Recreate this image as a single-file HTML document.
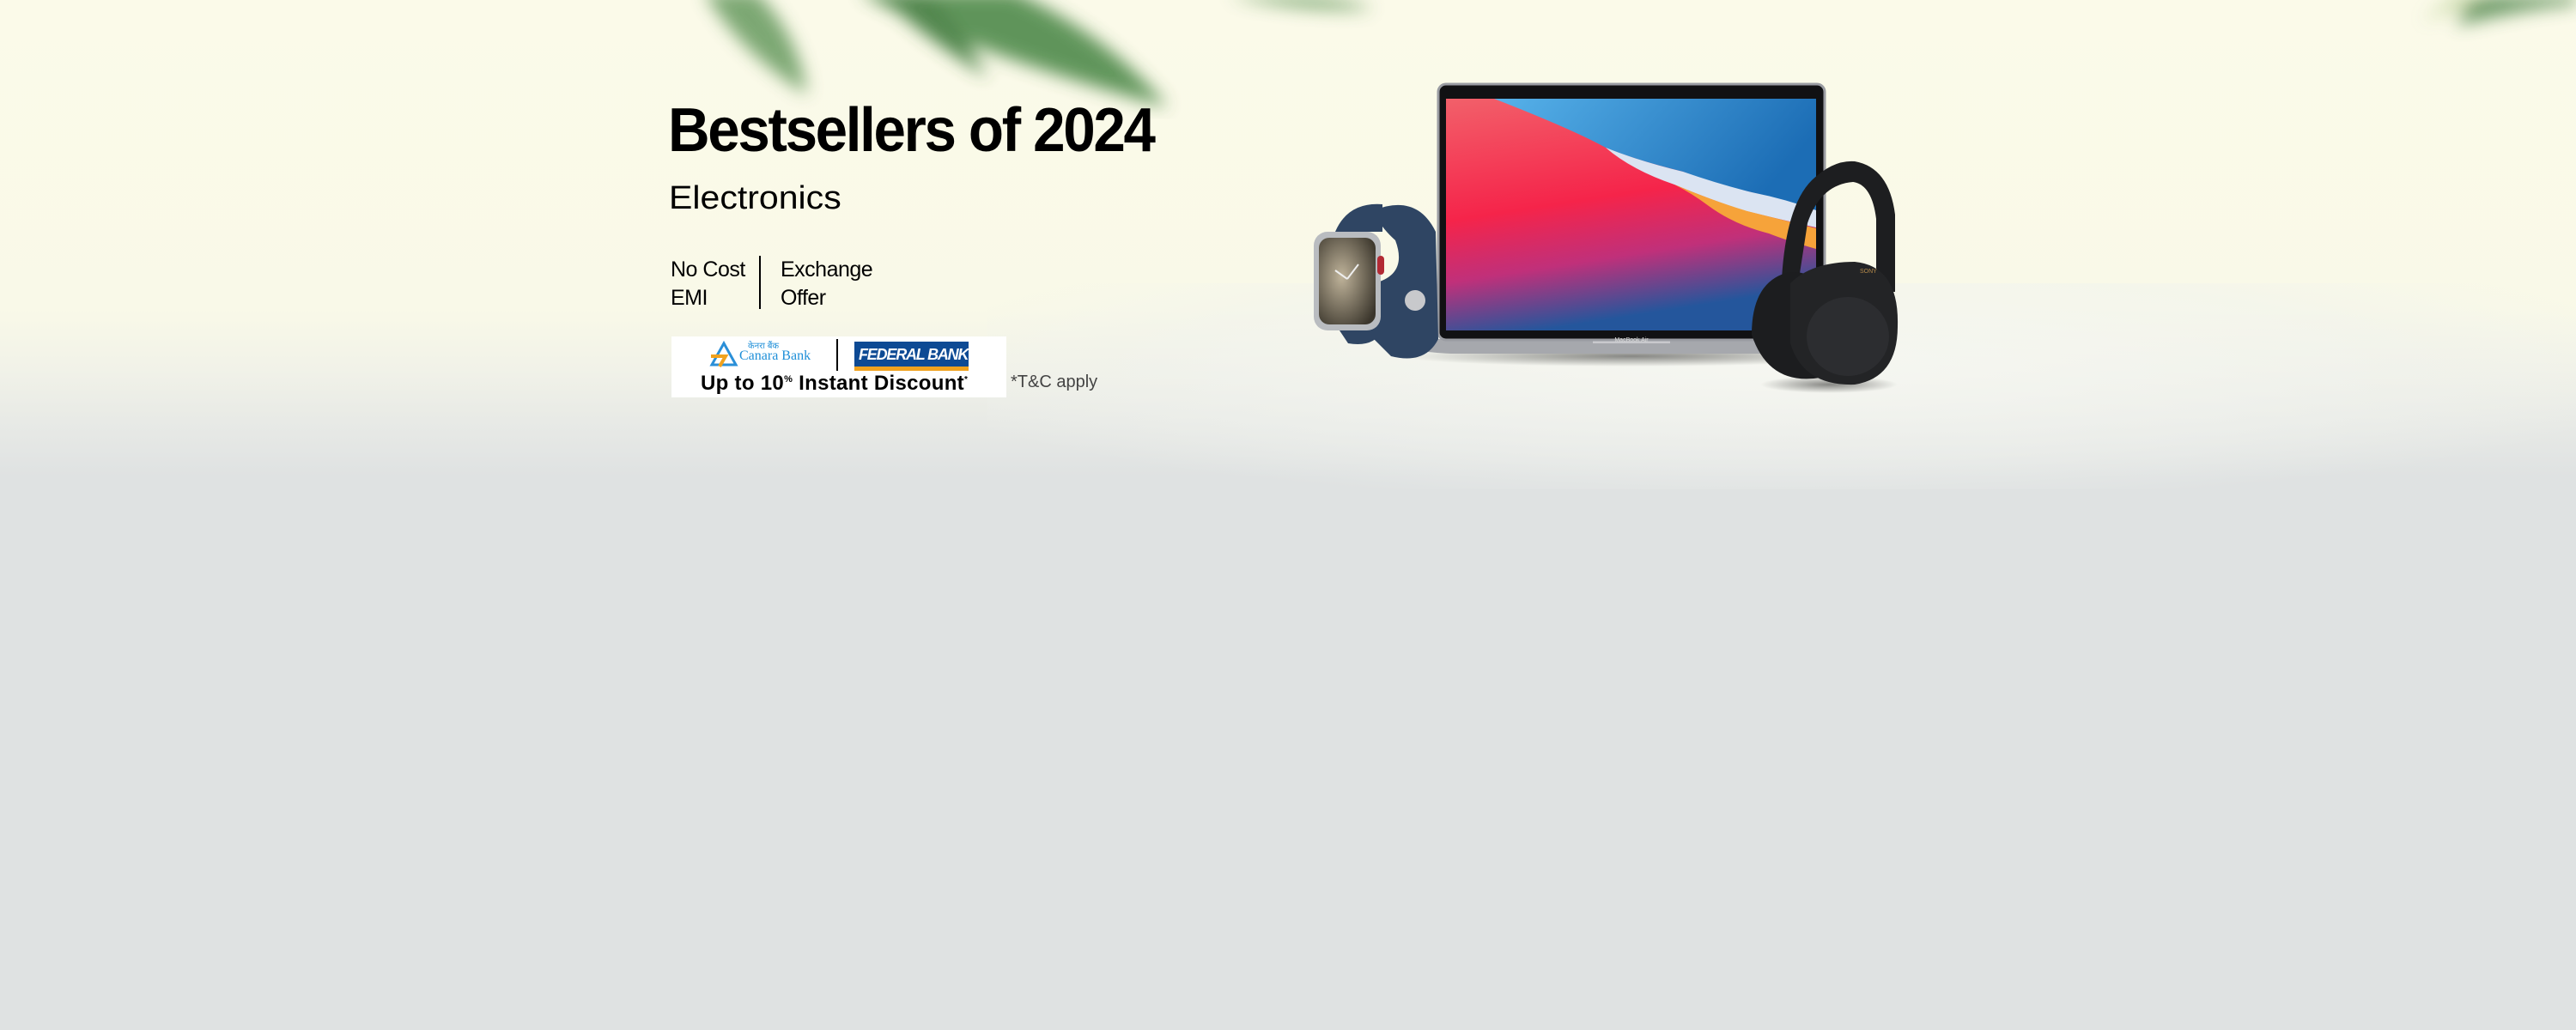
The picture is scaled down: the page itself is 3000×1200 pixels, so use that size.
<!DOCTYPE html>
<html><head><meta charset="utf-8"><style>
html,body{margin:0;padding:0}
body{width:3000px;height:1200px;overflow:hidden;position:relative;background:#dfe2e2;font-family:"Liberation Sans",sans-serif}
.bg{position:absolute;left:0;top:0;width:3000px;height:1200px;background:linear-gradient(180deg,#fbfae9 0px,#f9f9e8 360px,#f1f2e8 430px,#e8eae6 490px,#dfe2e2 555px,#dfe2e2 1200px)}
.marble{position:absolute;left:1150px;top:330px;width:1850px;height:240px;background:radial-gradient(ellipse at 50% 40%,rgba(246,247,242,.9),rgba(240,242,238,.5) 55%,rgba(223,226,226,0) 80%)}
.t{position:absolute;color:#000;white-space:nowrap;transform-origin:0 0}
</style></head><body>
<div class="bg"></div>
<div class="marble"></div>
<svg width="3000" height="1200" style="position:absolute;left:0;top:0">
<defs>
<filter id="b12"><feGaussianBlur stdDeviation="10"/></filter>
<linearGradient id="scr" x1="0" y1="0" x2="0.25" y2="1">
<stop offset="0" stop-color="#f2606a"/><stop offset="0.5" stop-color="#f5244a"/><stop offset="0.75" stop-color="#c0307a"/><stop offset="1" stop-color="#24569c"/></linearGradient>
<linearGradient id="blu" x1="0" y1="0" x2="1" y2="0.3"><stop offset="0" stop-color="#57b2ea"/><stop offset="1" stop-color="#1c6db5"/></linearGradient>
<radialGradient id="face" cx="0.4" cy="0.45" r="0.7"><stop offset="0" stop-color="#bfb39a"/><stop offset="1" stop-color="#3b362c"/></radialGradient>
<radialGradient id="sh" cx="0.5" cy="0.5" r="0.5"><stop offset="0" stop-color="#000" stop-opacity=".45"/><stop offset="1" stop-color="#000" stop-opacity="0"/></radialGradient>
</defs>
<g filter="url(#b12)" opacity=".9">
<path d="M1000 -10 Q1120 60 1360 125 Q1290 40 1180 -10Z" fill="#4f8a4c"/>
<path d="M1020 -10 Q1070 40 1150 90 Q1110 20 1080 -10Z" fill="#3f7a3c"/>
<path d="M820 -10 Q860 60 940 110 Q930 40 880 -10Z" fill="#6e9f66"/>
<path d="M1430 -5 Q1520 15 1600 10 Q1560 -5 1500 -5Z" fill="#6e9f66"/>
<path d="M2860 30 Q2940 10 3000 5 L3000 -5 L2880 -5Z" fill="#5b8f58"/>
<path d="M2820 25 Q2870 5 2900 -5 L2860 -5Z" fill="#bcd29a"/>
</g>
<ellipse cx="1900" cy="415" rx="270" ry="12" fill="url(#sh)"/>
<ellipse cx="2130" cy="448" rx="80" ry="10" fill="url(#sh)"/>
<path d="M1625 395 L2135 395 L2128 406 Q2100 412 2070 412 L1690 412 Q1650 410 1632 404Z" fill="#a6a8ad"/>
<rect x="1855" y="395" width="90" height="5" fill="#c8c9cd"/>
<rect x="1675" y="98" width="450" height="298" rx="9" fill="#111113"/>
<rect x="1675" y="98" width="450" height="298" rx="9" fill="none" stroke="#9a9ca2" stroke-width="3"/>
<rect x="1684" y="115" width="431" height="270" fill="url(#scr)"/>
<path d="M1740 115 L2115 115 L2115 245 Q2060 228 2030 222 Q1990 212 1960 200 Q1900 185 1870 172 Q1830 150 1740 115Z" fill="url(#blu)"/>
<path d="M1870 172 Q1910 188 1960 200 Q2000 214 2040 224 Q2080 232 2115 245 L2115 265 Q2070 255 2030 245 Q1990 232 1950 215 Q1900 198 1870 172Z" fill="#dbe4f2"/>
<path d="M1950 215 Q1995 234 2035 246 Q2075 256 2115 266 L2115 290 Q2080 280 2060 272 Q2020 262 1990 240 Q1970 225 1950 215Z" fill="#f6a33a"/>
<text x="1900" y="398" font-size="7" fill="#ddd" text-anchor="middle">MacBook Air</text>
<path d="M1600 245 Q1650 225 1672 270 L1675 395 Q1660 425 1620 415 L1590 385 L1600 330 Q1640 320 1625 280 Q1605 262 1600 245Z" fill="#2f4563"/>
<path d="M1555 270 Q1570 235 1610 238 L1610 270Z" fill="#2f4563"/>
<path d="M1560 385 L1610 385 Q1600 405 1570 400Z" fill="#2f4563"/>
<circle cx="1648" cy="350" r="12" fill="#c8c9cc"/>
<rect x="1530" y="270" width="78" height="115" rx="16" fill="#b9bcc0"/>
<rect x="1536" y="277" width="66" height="101" rx="12" fill="url(#face)"/>
<rect x="1604" y="298" width="8" height="22" rx="4" fill="#b22a34"/>
<path d="M1569 325 L1555 315 M1569 325 L1582 308" stroke="#eee" stroke-width="2"/>
<path d="M2075 325 Q2080 240 2110 210 Q2135 186 2160 188 Q2200 195 2207 250 L2207 340 L2185 340 L2185 255 Q2180 215 2158 212 Q2120 215 2105 260 L2095 325Z" fill="#1d1e20"/>
<path d="M2040 390 Q2040 330 2080 318 Q2110 312 2120 340 L2120 440 Q2060 450 2040 390Z" fill="#1c1d1f"/>
<path d="M2085 330 Q2110 305 2160 305 Q2212 310 2210 380 Q2210 440 2160 448 Q2100 450 2085 400Z" fill="#232426"/>
<ellipse cx="2152" cy="392" rx="48" ry="46" fill="#2c2d30"/>
<text x="2166" y="318" font-size="7" fill="#b58a4a">SONY</text>
</svg>
<div class="t" style="left:778px;top:111px;font-size:72px;font-weight:bold;letter-spacing:-2.5px;transform:scaleX(0.935)">Bestsellers of 2024</div>
<div class="t" style="left:779px;top:210px;font-size:38px;transform:scaleX(1.08)">Electronics</div>
<div class="t" style="left:781px;top:298px;font-size:25px;line-height:33px;letter-spacing:-0.5px">No Cost<br>EMI</div>
<div style="position:absolute;left:884px;top:298px;width:2px;height:62px;background:#000"></div>
<div class="t" style="left:909px;top:298px;font-size:25px;line-height:33px;letter-spacing:-0.5px">Exchange<br>Offer</div>
<div style="position:absolute;left:782px;top:392px;width:390px;height:71px;background:#fff"></div>
<svg style="position:absolute;left:826px;top:397px" width="34" height="32"><path d="M17 3 L31 28 L3 28Z" fill="none" stroke="#2a8fd8" stroke-width="3"/><path d="M2 18 L19 18 L12 30" fill="none" stroke="#f0a21e" stroke-width="4"/></svg>
<div class="t" style="left:871px;top:395px;font-size:10px;color:#1f8fd8">केनरा बैंक</div>
<div class="t" style="left:861px;top:406px;font-family:'Liberation Serif',serif;font-size:16px;color:#1f8fd8">Canara Bank</div>
<div style="position:absolute;left:974px;top:395px;width:2px;height:37px;background:#000"></div>
<div style="position:absolute;left:995px;top:398px;width:133px;height:29px;background:#0d4a94;border-bottom:5px solid #f0a21e;overflow:hidden"><span style="position:absolute;left:5px;top:5px;font-size:18px;font-weight:bold;color:#fff;font-style:italic;letter-spacing:-1.2px;white-space:nowrap">FEDERAL BANK</span></div>
<div class="t" style="left:816px;top:433px;font-size:24px;font-weight:bold;letter-spacing:0.3px">Up to 10<sup style="font-size:11px">%</sup> Instant Discount<sup style="font-size:10px">*</sup></div>
<div class="t" style="left:1177px;top:434px;font-size:20px;color:#444">*T&amp;C apply</div>
</body></html>
